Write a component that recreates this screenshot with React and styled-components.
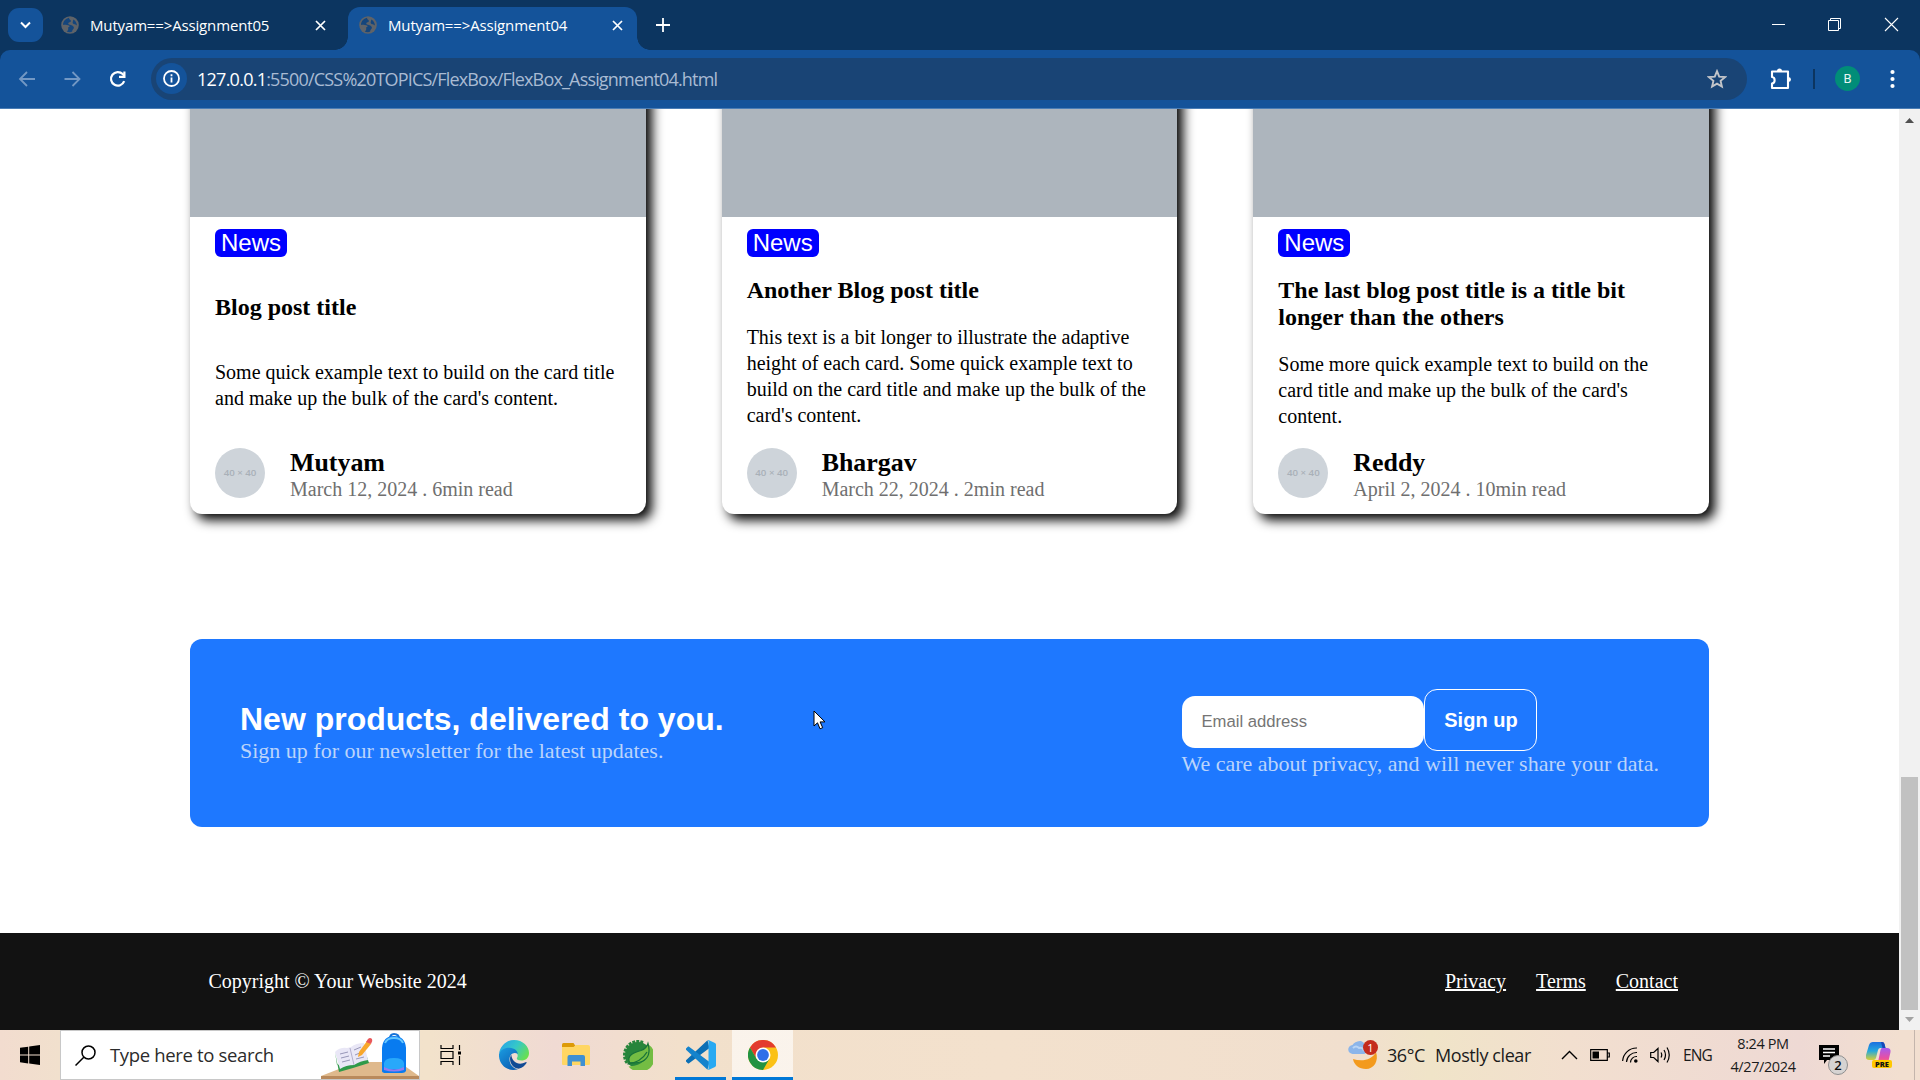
import React from "react";
import styled, { createGlobalStyle } from "styled-components";

const GlobalStyle = createGlobalStyle`
  * { box-sizing: border-box; }
  html, body { margin: 0; padding: 0; }
  body { width: 1920px; height: 1080px; overflow: hidden; background: #fff; }
  h1, h2, h3, p { margin: 0; }
  svg { display: block; flex: none; }
`;

const ui = `"Open Sans", "Noto Sans", sans-serif`;
const serif = `"Liberation Serif", "Times New Roman", serif`;
const sans = `"Liberation Sans", Arial, sans-serif`;

const Screen = styled.div`
  position: relative;
  display: flex;
  flex-direction: column;
  width: 1920px;
  height: 1080px;
  overflow: hidden;
`;

/* ---------- browser frame ---------- */

const TabStrip = styled.header`
  display: flex;
  align-items: flex-start;
  height: 50px;
  flex: none;
  padding-left: 8px;
  background: #0c3560;
  color: #fff;
`;

const TabSearch = styled.button`
  display: grid;
  place-items: center;
  width: 35px;
  height: 34px;
  margin-top: 8px;
  padding: 0;
  border: 0;
  border-radius: 11px;
  background: #14539a;
`;

const Tab = styled.div`
  position: relative;
  display: flex;
  align-items: center;
  width: ${(p) => (p.$active ? 289 : 305)}px;
  height: 43px;
  margin-top: 7px;
  padding: 0 12px 7px ${(p) => (p.$active ? 11 : 18)}px;
  border-radius: 12px 12px 0 0;
  background: ${(p) => (p.$active ? "#14539a" : "transparent")};
  &::before, &::after {
    content: ${(p) => (p.$active ? '""' : "none")};
    position: absolute;
    bottom: 0;
    width: 13px;
    height: 13px;
  }
  &::before { left: -13px; background: radial-gradient(circle at 0 0, transparent 12.5px, #14539a 13px); }
  &::after { right: -13px; background: radial-gradient(circle at 100% 0, transparent 12.5px, #14539a 13px); }
`;

const TabTitle = styled.span`
  flex: 1;
  margin-left: 11px;
  font: 15px/20px ${ui};
  letter-spacing: -0.15px;
  white-space: nowrap;
`;

const CloseIcon = styled.svg`
  margin-right: ${(p) => (p.$active ? 2 : 10)}px;
`;

const NewTab = styled.div`
  margin: 18px 0 0 19px;
`;

const WindowControls = styled.div`
  display: flex;
  gap: 43px;
  margin: 17px 21px 0 auto;
`;

const ToolbarBack = styled.div`
  height: 59px;
  flex: none;
  background: #0c3560;
`;

const Toolbar = styled.div`
  display: flex;
  align-items: center;
  height: 59px;
  padding: 0 20px 1px 17px;
  border-radius: 10px 10px 0 0;
  border-bottom: 1px solid #4a7db5;
  background: #14539a;
`;

const NavButtons = styled.nav`
  display: flex;
  align-items: center;
  gap: 25px;
  width: 134px;
`;

const AddressBar = styled.div`
  display: flex;
  align-items: center;
  width: 1596px;
  height: 42px;
  padding: 0 20px 0 5px;
  border-radius: 21px;
  background: #194475;
`;

const SiteInfo = styled.div`
  display: grid;
  place-items: center;
  width: 31px;
  height: 31px;
  border-radius: 50%;
  background: #14539a;
`;

const Url = styled.span`
  flex: 1;
  margin-left: 10px;
  font: 18px/26px ${ui};
  letter-spacing: -0.82px;
  color: #a9bbd3;
  b { font-weight: 400; letter-spacing: -0.75px; color: #fff; }
`;

const Extensions = styled.svg`
  margin-left: 23px;
`;

const Divider = styled.i`
  width: 2px;
  height: 20px;
  margin: 0 20px 0 21px;
  background: #0c3560;
`;

const Profile = styled.div`
  display: grid;
  place-items: center;
  width: 25px;
  height: 25px;
  margin-right: 30px;
  border-radius: 50%;
  background: #018d78;
  color: #e6f4f1;
  font: 13px/25px Roboto, sans-serif;
`;

/* ---------- page ---------- */

const Viewport = styled.div`
  display: flex;
  height: 921px;
  flex: none;
  overflow: hidden;
`;

const Page = styled.main`
  display: flex;
  flex-direction: column;
  width: 1899px;
  overflow: hidden;
  background: #fff;
`;

/* the page is scrolled, so the tops of the cards are cut off */
const Cards = styled.section`
  display: flex;
  justify-content: space-between;
  width: 1519px;
  margin: -60px auto 0;
`;

const Card = styled.article`
  width: 455.7px;
  height: 465px;
  border-radius: 12px;
  background: #fff;
  box-shadow: 6px 6px 12px #000;
`;

const Photo = styled.div`
  height: 168px;
  border-radius: 12px 12px 0 0;
  background: #adb5bd;
`;

const CardBody = styled.div`
  display: flex;
  flex-direction: column;
  align-items: flex-start;
  justify-content: space-between;
  height: 297px;
  padding: 12px 25px 16px;
  font-family: ${serif};
`;

const NewsBadge = styled.span`
  padding: 0 6px;
  border-radius: 6px;
  background: #00f;
  color: #fff;
  font: 24px/28px ${sans};
`;

const CardTitle = styled.h3`
  padding-top: 0.4px;
  font-size: 24px;
  line-height: 27px;
  color: #000;
`;

const CardText = styled.p`
  padding-top: 0.4px;
  font-size: 20px;
  line-height: 26px;
  white-space: pre-line;
  color: #000;
`;

const Author = styled.div`
  display: flex;
  gap: 25px;
  height: 50px;
`;

const Avatar = styled.div`
  display: grid;
  place-items: center;
  width: 50px;
  height: 50px;
  border-radius: 50%;
  background: #ced4da;
  color: #a9b0b8;
  font: 600 9.7px/12px ${ui};
`;

const AuthorName = styled.h2`
  padding-top: 1px;
  font-size: 25.9px;
  line-height: 28px;
  color: #000;
`;

const Meta = styled.p`
  font-size: 20px;
  line-height: 25px;
  color: #6f6f6f;
`;

const Newsletter = styled.section`
  display: flex;
  align-items: center;
  justify-content: space-between;
  width: 1519px;
  height: 188px;
  flex: none;
  margin: 125px auto 0;
  padding: 0 50px 2px;
  border-radius: 12px;
  background: #1e78ff;
`;

const Heading = styled.h1`
  font: bold 32px/37px ${sans};
  color: #fff;
`;

const Soft = styled.p`
  font: 22px/25px ${serif};
  color: #bbd4fb;
`;

const Form = styled.div`
  display: flex;
  align-items: center;
  padding-left: 1px;
`;

const EmailField = styled.input`
  width: 242px;
  height: 52px;
  margin-top: 4px;
  padding: 0 19px;
  border: 0;
  border-radius: 13px;
  outline: 0;
  background: #fff;
  font: 16.67px ${sans};
  &::placeholder { color: #757575; opacity: 1; }
`;

const SignUp = styled.button`
  width: 113px;
  height: 62px;
  padding: 1px 0 0;
  border: 1px solid #fff;
  border-radius: 13px;
  background: transparent;
  color: #fff;
  font: bold 20px ${sans};
`;

const Footer = styled.footer`
  display: flex;
  align-items: center;
  justify-content: space-between;
  height: 97px;
  flex: none;
  margin-top: auto;
  padding: 0 221px 0 208.5px;
  background: #121212;
  color: #fff;
  font: 20px/23px ${serif};
`;

const FooterLinks = styled.nav`
  display: flex;
  gap: 30px;
  a { color: #fff; text-decoration: underline; }
`;

const Scrollbar = styled.aside`
  display: flex;
  flex-direction: column;
  align-items: center;
  width: 21px;
  padding: 9px 0 8px;
  background: #f1f1f1;
`;

const Thumb = styled.div`
  width: 17px;
  height: 233px;
  margin: auto 0 7px;
  background: #c1c1c1;
`;

/* ---------- taskbar ---------- */

const Taskbar = styled.div`
  display: flex;
  height: 50px;
  flex: none;
  background: linear-gradient(90deg, #f2dccf 0, #f1e0cd 60px, #f2e2cb 430px, #f0dad3 555px, #f2e0cb 680px, #f3e1cd 1000px, #f1dfce 1350px, #f0e4c8 1430px, #f2dfcf 1570px, #eed9d4 1800px, #f2dfd0 1900px);
  color: #1b1b1b;
`;

const StartButton = styled.div`
  display: grid;
  place-items: center;
  width: 60px;
`;

const SearchBox = styled.div`
  display: flex;
  align-items: center;
  width: 360px;
  padding-left: 14px;
  border: 1px solid #c8c8c8;
  background: #fff;
`;

const SearchText = styled.span`
  flex: 1;
  margin-left: 14px;
  font: 18.5px/26px ${ui};
  letter-spacing: -0.34px;
  color: #2b2b2b;
  white-space: nowrap;
`;

const AppSlot = styled.div`
  display: grid;
  place-items: center;
  width: ${(p) => p.$w || 61}px;
  margin-left: ${(p) => p.$ml || 0}px;
  padding-top: ${(p) => (p.$running ? 3 : 0)}px;
  border-bottom: ${(p) => (p.$running ? "3px solid #0078d7" : "0")};
  background: ${(p) => (p.$focused ? "rgba(255,255,255,.62)" : "transparent")};
`;

const Tray = styled.div`
  display: flex;
  align-items: center;
  margin-left: auto;
  font: 18px/26px ${ui};
`;

const WeatherIcon = styled.div`
  position: relative;
  width: 32px;
  margin-right: 8px;
`;

const Alert = styled.span`
  position: absolute;
  top: 0;
  right: 1px;
  width: 15px;
  height: 15px;
  border-radius: 50%;
  background: #c42b1c;
  color: #fff;
  font: 11px/15px ${ui};
  text-align: center;
`;

const Label = styled.span`
  width: ${(p) => p.$w}px;
  font-size: ${(p) => p.$size || 18}px;
  letter-spacing: ${(p) => p.$ls || -0.42}px;
  white-space: nowrap;
`;

const TrayIcons = styled.div`
  display: flex;
  align-items: center;
  gap: 12px;
  margin-right: 12px;
`;

const Clock = styled.div`
  width: 76px;
  margin-left: 8px;
  text-align: center;
  font: 14.5px/23px ${ui};
  letter-spacing: -0.4px;
`;

const Notifications = styled.div`
  position: relative;
  margin-left: 18px;
  width: 47px;
`;

const Count = styled.span`
  position: absolute;
  left: 9px;
  top: 10px;
  width: 20px;
  height: 20px;
  border: 1px solid #8f8f8f;
  border-radius: 50%;
  background: #d6d3d2;
  color: #111;
  font: 600 13px/18px ${ui};
  text-align: center;
`;

const Copilot = styled.div`
  position: relative;
  width: 26px;
  height: 26px;
`;

const Pre = styled.span`
  position: absolute;
  right: 0;
  bottom: 0;
  width: 20px;
  height: 8px;
  border-radius: 2px;
  background: #ffc800;
  color: #111;
  font: 800 7.5px/8px ${ui};
  text-align: center;
`;

const DesktopEdge = styled.i`
  align-self: stretch;
  width: 6px;
  margin-left: 22px;
  border-left: 1px solid #c4b5ac;
`;

const Pointer = styled.svg`
  position: absolute;
  left: 813px;
  top: 710px;
`;

/* ---------- icons ---------- */

const Globe = () => (
  <svg width="18" height="18" viewBox="0 0 18 18">
    <circle cx="9" cy="9" r="8.8" fill="#5f6368" />
    <path d="M8 1.8C4.600 2.600 2 5.500 2 8.900c1.900-.6 4.400 0 6 .7 1.200.6.600 1.700-.8 1.700v2.300c0 .900-.8 1.200-1.500 1.800 2 1 4.300.900 5.500.2-.1-1.900.9-2.200 1.600-3.400.5-1-.5-2.100-1.700-2.700C9.500 8.700 8 8.600 7.400 7.900c-.4-.7.1-1.500 1.200-1.700 1.200-.2 1.500-.8 1.200-1.700-.3-.7-1.700-.7-1.800-2.700z" fill="#14457c" />
    <path d="M12.300 3.400c-.2 1.600-1 2.800-.5 3.900.8 1.200 2.900.9 4.200 2.200-.1-2.800-1.600-4.900-3.700-6.100z" fill="#14457c" />
  </svg>
);

const Cross = ({ active }) => (
  <CloseIcon $active={active} width="11" height="11" viewBox="0 0 11 11" stroke="#fff" strokeWidth="1.700">
    <path d="M1 1l9 9M10 1l-9 9" />
  </CloseIcon>
);

const Arrow = ({ flip }) => (
  <svg width="20" height="20" viewBox="0 0 20 20" fill="none" stroke="#7398c4" strokeWidth="1.800">
    <path d={flip ? "M2.500 10h15M10.500 3l7 7-7 7" : "M18 10h-15M10 3l-7 7 7 7"} />
  </svg>
);

const Reload = () => (
  <svg width="20" height="20" viewBox="0 0 20 20" fill="none" stroke="#fff" strokeWidth="2.200">
    <path d="M17.200 12.200a6.800 6.800 0 1 1-1.500-7.100l1.500 1.600" />
    <path d="M17.400 2.500v5.400h-5.400" />
  </svg>
);

const Edge = () => (
  <svg width="30" height="30" viewBox="0 0 30 30">
    <defs>
      <linearGradient id="edgeTop" x1="0" y1=".2" x2="1" y2=".7">
        <stop offset="0" stopColor="#27a4e8" />
        <stop offset=".5" stopColor="#35c8c8" />
        <stop offset="1" stopColor="#6be04c" />
      </linearGradient>
      <linearGradient id="edgeLow" x1="0" y1="0" x2=".7" y2="1">
        <stop offset="0" stopColor="#1b9de2" />
        <stop offset="1" stopColor="#0b60b4" />
      </linearGradient>
    </defs>
    <path d="M0 14C1 6 7.500 0 15 0c9 0 15 6.500 15 13 0 5-3.500 7.500-7.500 7.500-3.600 0-5-1.300-4.600-2.400C20 15.500 18 9.500 10.500 9.500 5 9.500.5 12 0 14z" fill="url(#edgeTop)" />
    <path d="M0 14c1.500-4 5.500-6.500 10.500-6.300 5 .2 8.300 3.300 8.300 6.300-4-3-8.300.5-8.300 5.200 0 5.500 4 9.300 8.500 10C7.500 32.500-.8 23.500 0 14z" fill="url(#edgeLow)" />
    <path d="M12.300 14.800c-3.500 5 .7 14.400 8 13.800 3-.8 5.800-3.200 7.200-5.700.3-.7-.3-1-.9-.6-6.600 3.200-13.600.6-14.300-7.500z" fill="#114a94" />
  </svg>
);

const Folder = () => (
  <svg width="28" height="24" viewBox="0 0 28 24">
    <path d="M0 1.500Q0 0 1.500 0h10l2 3-2 2H0z" fill="#dd9a07" />
    <path d="M0 4h11.500L14 2h12q2 0 2 2v17q0 1-1 1H1q-1 0-1-1z" fill="#ffd663" />
    <path d="M5.500 23V14q0-2 2-2h13.500q2 0 2 2v9h-4.500v-4.500h-8.500V23z" fill="#3e90d2" />
  </svg>
);

const gearTeeth = Array.from({ length: 9 }, (_, i) => 150 + i * 17);

const Leaf = () => (
  <svg width="30" height="30" viewBox="0 0 30 30">
    <circle cx="15" cy="15" r="13" fill="#27853b" />
    <g fill="#27853b">
      {gearTeeth.map((a) => (
        <rect key={a} x="26" y="13.500" width="4" height="3" transform={`rotate(${a} 15 15)`} />
      ))}
    </g>
    <path d="M25.500 4.500A15 15 0 1 1 5.500 26.500C17 26 28 20 25.500 4.500z" fill="#74bd43" />
    <path d="M25 3.500c2.500 9 .5 15-6 18-4 1.800-9 1.500-12.500 1C3.500 15 11 12.500 18 10.500 21.500 9.300 24 7 25 3.500z" fill="#74bd43" stroke="#187339" strokeWidth="1.200" />
    <path d="M4.500 24C13 23 20 19 24 12" fill="none" stroke="#187339" strokeWidth="1.300" />
  </svg>
);

const Code = () => (
  <svg width="30" height="30" viewBox="0 0 30 30">
    <path d="M21.500.2L0 20.200c-.4.400-.4 1 0 1.400l1.800 1.600c.4.400.9.400 1.300.1L23.500 8z" fill="#0b6fb5" />
    <path d="M21.500 29.800L0 9.800c-.4-.4-.4-1 0-1.400l1.800-1.600c.4-.4.900-.4 1.300-.1L23.500 22z" fill="#1583cc" />
    <path d="M21.500.2c.7-.3 1.100-.2 1.500 0l6 2.900c.7.300 1 .9 1 1.500v20.800c0 .6-.3 1.200-1 1.500l-6 2.900c-.5.200-1 .2-1.500 0 .5.2 1-.2 1-1V1.200c0-.8-.5-1.200-1-1z" fill="#29a9f2" />
  </svg>
);

const Chrome = () => (
  <svg width="30" height="30" viewBox="0 0 30 30">
    <circle cx="15" cy="15" r="15" fill="#fbc116" />
    <path d="M2 7.500A15 15 0 0 1 28 7.500H15L8.500 18.800z" fill="#e33b2e" />
    <path d="M2 7.500A15 15 0 0 0 15 30l6.500-11.200H8.500z" fill="#229342" />
    <circle cx="15" cy="15" r="7.500" fill="#fff" />
    <circle cx="15" cy="15" r="5.900" fill="#2f6fe8" />
  </svg>
);

const TaskView = () => (
  <svg width="21" height="20" viewBox="0 0 21 20" fill="none" stroke="#000" strokeWidth="1.200">
    <path d="M1 0v3.500h12V0M1 20v-3.500h12V20M1 6.500h12v7H1zM19.500 0v5M19.500 11v9" />
    <path d="M18 6.500h3v3h-3z" fill="#000" stroke="none" />
  </svg>
);

const SchoolScene = () => (
  <svg width="98" height="48" viewBox="0 0 98 48">
    <path d="M36 31H78L98 45H0z" fill="#dfb98c" />
    <path d="M0 45h98v3H0z" fill="#b98a5c" />
    <path d="M14 21l4 20 14-4 16-5-2-6-30 8z" fill="#2f9a4a" />
    <path d="M14 21q5-5 12-4l4-1q5-4 13-4l4 17q-8 1-14 5-8 0-14 4z" fill="#e9e7f6" />
    <path d="M29 17l4 17" stroke="#b3b0ce" strokeWidth="1" />
    <path d="M19 23l8-2M20 27l8-2M21 31l8-2M33 19l7-3M34 24l7-3M35 28l8-2" stroke="#9897b8" strokeWidth="1" />
    <path d="M37 26l1-5L46 10l4 3-9 11z" fill="#f8a72b" />
    <path d="M45 11l2-3q2-2 4 0 1 2-1 5z" fill="#e9575a" />
    <g transform="translate(1 0)">
      <path d="M68 8q0-5 4-5 5 0 5 5" fill="none" stroke="#1874d8" strokeWidth="2.200" />
      <path d="M60 40V17q1-12 12-12t12 12v23q-1 2-4 2H64q-4 0-4-2z" fill="#087bf0" />
      <path d="M63 12q2-5 9-5t9 5" fill="none" stroke="#65c7ff" strokeWidth="2" />
      <path d="M62 38v-6q1-5 10-5t10 5v6z" fill="#28a8fa" />
      <path d="M62 36q10 5 20 0v3q-10 3-20 0z" fill="#927cf0" />
    </g>
  </svg>
);

const Weather = () => (
  <svg width="32" height="30" viewBox="0 0 32 30">
    <path d="M29 12c3 9-2 17-10 17-7 0-12-4-13-10 9 3 19 1 23-7z" fill="#f39a1d" />
    <path d="M6 14a4.500 4.500 0 0 1-.5-9C7 3 11 0 15 1.500c2 1 3 3 3 4.500 3 1 3 7-1 8z" fill="#8bb5ea" />
    <path d="M6 8q3-3 6 0 4-1 5 3" stroke="#b9d4f5" strokeWidth="2" fill="none" />
  </svg>
);

const cards = [
  {
    title: "Blog post title",
    text: "Some quick example text to build on the card title\nand make up the bulk of the card's content.",
    author: "Mutyam",
    meta: "March 12, 2024 . 6min read",
  },
  {
    title: "Another Blog post title",
    text: "This text is a bit longer to illustrate the adaptive\nheight of each card. Some quick example text to\nbuild on the card title and make up the bulk of the\ncard's content.",
    author: "Bhargav",
    meta: "March 22, 2024 . 2min read",
  },
  {
    title: "The last blog post title is a title bit longer than the others",
    text: "Some more quick example text to build on the\ncard title and make up the bulk of the card's\ncontent.",
    author: "Reddy",
    meta: "April 2, 2024 . 10min read",
  },
];

export default function App() {
  return (
    <Screen>
      <GlobalStyle />
      <TabStrip>
        <TabSearch>
          <svg width="11" height="8" viewBox="0 0 11 8" fill="none" stroke="#fff" strokeWidth="2">
            <path d="M1 1.500l4.500 4.500L10 1.500" />
          </svg>
        </TabSearch>
        <Tab>
          <Globe />
          <TabTitle>Mutyam==&gt;Assignment05</TabTitle>
          <Cross />
        </Tab>
        <Tab $active>
          <Globe />
          <TabTitle>Mutyam==&gt;Assignment04</TabTitle>
          <Cross active />
        </Tab>
        <NewTab>
          <svg width="14" height="14" viewBox="0 0 14 14" stroke="#fff" strokeWidth="1.800">
            <path d="M7 0v14M0 7h14" />
          </svg>
        </NewTab>
        <WindowControls>
          <svg width="13" height="15" viewBox="0 0 13 15" stroke="#fff"><path d="M0 7.500h13" /></svg>
          <svg width="13" height="15" viewBox="0 0 13 15" fill="none" stroke="#fff">
            <path d="M.5 3.500h10v10H.5zM2.500 3.500v-2h10v10h-2" />
          </svg>
          <svg width="15" height="15" viewBox="0 0 15 15" stroke="#fff" strokeWidth="1.100">
            <path d="M1 1l13 13M14 1L1 14" />
          </svg>
        </WindowControls>
      </TabStrip>

      <ToolbarBack>
        <Toolbar>
          <NavButtons>
            <Arrow />
            <Arrow flip />
            <Reload />
          </NavButtons>
          <AddressBar>
            <SiteInfo>
              <svg width="17" height="17" viewBox="0 0 17 17" fill="none" stroke="#fff" strokeWidth="1.800">
                <circle cx="8.500" cy="8.500" r="7.500" />
                <path d="M8.500 7.500v5M8.500 4.200v2" />
              </svg>
            </SiteInfo>
            <Url><b>127.0.0.1</b>:5500/CSS%20TOPICS/FlexBox/FlexBox_Assignment04.html</Url>
            <svg width="20" height="20" viewBox="0 0 20 20" fill="none" stroke="#c3c5c9" strokeWidth="1.900">
              <path d="M10 2.200l2.200 5.400 5.800.5-4.400 3.800 1.300 5.700L10 14.600l-4.900 3 1.300-5.700L2 8.100l5.800-.5z" />
            </svg>
          </AddressBar>
          <Extensions width="22" height="22" viewBox="0 0 22 22" fill="none" stroke="#fff" strokeWidth="2.100" strokeLinejoin="round">
            <path d="M2 3.500h16V20H2v-4.500c3.500-.3 3.500-6.200 0-6.500z" />
            <path d="M7 3a2.500 2.500 0 0 1 5 0zM18.500 9a2.500 2.500 0 0 1 0 5z" fill="#fff" stroke="none" />
          </Extensions>
          <Divider />
          <Profile>B</Profile>
          <svg width="6" height="20" viewBox="0 0 6 20" fill="#fff">
            <circle cx="2.500" cy="3" r="2.100" />
            <circle cx="2.500" cy="10" r="2.100" />
            <circle cx="2.500" cy="17" r="2.100" />
          </svg>
        </Toolbar>
      </ToolbarBack>

      <Viewport>
        <Page>
          <Cards>
            {cards.map((c) => (
              <Card key={c.author}>
                <Photo />
                <CardBody>
                  <NewsBadge>News</NewsBadge>
                  <CardTitle>{c.title}</CardTitle>
                  <CardText>{c.text}</CardText>
                  <Author>
                    <Avatar>40 × 40</Avatar>
                    <div>
                      <AuthorName>{c.author}</AuthorName>
                      <Meta>{c.meta}</Meta>
                    </div>
                  </Author>
                </CardBody>
              </Card>
            ))}
          </Cards>

          <Newsletter>
            <div>
              <Heading>New products, delivered to you.</Heading>
              <Soft>Sign up for our newsletter for the latest updates.</Soft>
            </div>
            <div>
              <Form>
                <EmailField placeholder="Email address" />
                <SignUp>Sign up</SignUp>
              </Form>
              <Soft>We care about privacy, and will never share your data.</Soft>
            </div>
          </Newsletter>

          <Footer>
            <span>Copyright © Your Website 2024</span>
            <FooterLinks>
              <a>Privacy</a>
              <a>Terms</a>
              <a>Contact</a>
            </FooterLinks>
          </Footer>
        </Page>
        <Scrollbar>
          <svg width="9" height="5" viewBox="0 0 9 5" fill="#505050"><path d="M0 5L4.500 0 9 5z" /></svg>
          <Thumb />
          <svg width="9" height="5" viewBox="0 0 9 5" fill="#a3a3a3"><path d="M0 0h9L4.500 5z" /></svg>
        </Scrollbar>
      </Viewport>

      <Taskbar>
        <StartButton>
          <svg width="20" height="20" viewBox="0 0 20 20" fill="#000">
            <path d="M0 2.800l8.200-1.100v7.900H0zM9.200 1.500L20 0v9.600H9.200zM0 10.500h8.200v7.900L0 17.300zM9.200 10.500H20V20L9.200 18.500z" />
          </svg>
        </StartButton>
        <SearchBox>
          <svg width="21" height="21" viewBox="0 0 21 21" fill="none" stroke="#000" strokeWidth="1.500">
            <circle cx="13.500" cy="7.500" r="6.500" />
            <path d="M8.800 12.200L.5 20.500" />
          </svg>
          <SearchText>Type here to search</SearchText>
          <SchoolScene />
        </SearchBox>
        <AppSlot $w={60}><TaskView /></AppSlot>
        <AppSlot $w={67}><Edge /></AppSlot>
        <AppSlot $w={57}><Folder /></AppSlot>
        <AppSlot $w={67}><Leaf /></AppSlot>
        <AppSlot $w={51} $ml={4} $running><Code /></AppSlot>
        <AppSlot $w={61} $ml={6} $running $focused><Chrome /></AppSlot>

        <Tray>
          <WeatherIcon>
            <Weather />
            <Alert>1</Alert>
          </WeatherIcon>
          <Label $w={48}>36°C</Label>
          <Label $w={126}>Mostly clear</Label>
          <TrayIcons>
            <svg width="17" height="10" viewBox="0 0 17 10" fill="none" stroke="#000" strokeWidth="1.400"><path d="M1 9l7.500-7.500L16 9" /></svg>
            <svg width="20" height="12" viewBox="0 0 20 12" fill="none" stroke="#000" strokeWidth="1.200">
              <path d="M.7.700h16.600v10.600H.7zM17.500 4h1.800v4h-1.800" />
              <path d="M2.500 2.500H9v7H2.500z" fill="#000" stroke="none" />
            </svg>
            <svg width="16" height="16" viewBox="0 0 16 16" fill="none" stroke="#000" strokeWidth="1.200">
              <path d="M.6 14A14 14 0 0 1 15 1M4.500 15A10 10 0 0 1 15 5.500M8.500 15.500A6 6 0 0 1 15 9.500" />
              <circle cx="13.800" cy="14" r="1.800" fill="#000" stroke="none" />
            </svg>
            <svg width="21" height="18" viewBox="0 0 21 18" fill="none" stroke="#000" strokeWidth="1.200">
              <path d="M.7 6.500h3L8 2.500v13l-4.300-4h-3zM11 6.500q1.500 2.500 0 5M14 4q3 5 0 10M17 1.500q4.500 7.500 0 15" />
            </svg>
          </TrayIcons>
          <Label $w={34} $size={15.5} $ls={-0.9}>ENG</Label>
          <Clock>
            <div>8:24 PM</div>
            <div>4/27/2024</div>
          </Clock>
          <Notifications>
            <svg width="20" height="20" viewBox="0 0 20 20">
              <path d="M0 0h20v15H8l-3 4v-4H0z" fill="#000" />
              <path d="M4 4h12M4 7.500h12M4 11h7" stroke="#fff" strokeWidth="1.300" />
            </svg>
            <Count>2</Count>
          </Notifications>
          <Copilot>
            <svg width="25" height="24" viewBox="0 0 25 24">
              <defs>
                <linearGradient id="pilotA" x1="0" y1="0" x2="0" y2="1">
                  <stop offset="0" stopColor="#1a6fe0" />
                  <stop offset=".5" stopColor="#25a9dc" />
                  <stop offset="1" stopColor="#d8cf35" />
                </linearGradient>
                <linearGradient id="pilotB" x1="0" y1="0" x2="0" y2="1">
                  <stop offset="0" stopColor="#a55bf0" />
                  <stop offset=".6" stopColor="#ea4fa0" />
                  <stop offset="1" stopColor="#ff9a4a" />
                </linearGradient>
              </defs>
              <path d="M7 0h9q2 0 2.500 2l1 4h-5q-2 0-2.500 2l-2 8q-.5 2-2.500 2H3q-4 0-3-5L3 3q1-3 4-3z" fill="url(#pilotA)" />
              <path d="M15 0h1q2 0 2.500 2l1 4h-3z" fill="#1748b8" />
              <path d="M16 6h5q4 0 3.500 4l-2 9q-1 4-4 4H9q2 0 3-3l2.500-12q.5-2 1.500-2z" fill="url(#pilotB)" />
            </svg>
            <Pre>PRE</Pre>
          </Copilot>
          <DesktopEdge />
        </Tray>
      </Taskbar>

      <Pointer width="14" height="20" viewBox="0 0 14 20">
        <path d="M1 1v15l3.500-3.200 2.500 6 2.700-1.100-2.600-5.800H12z" fill="#fff" stroke="#000" strokeWidth="1" />
      </Pointer>
    </Screen>
  );
}
